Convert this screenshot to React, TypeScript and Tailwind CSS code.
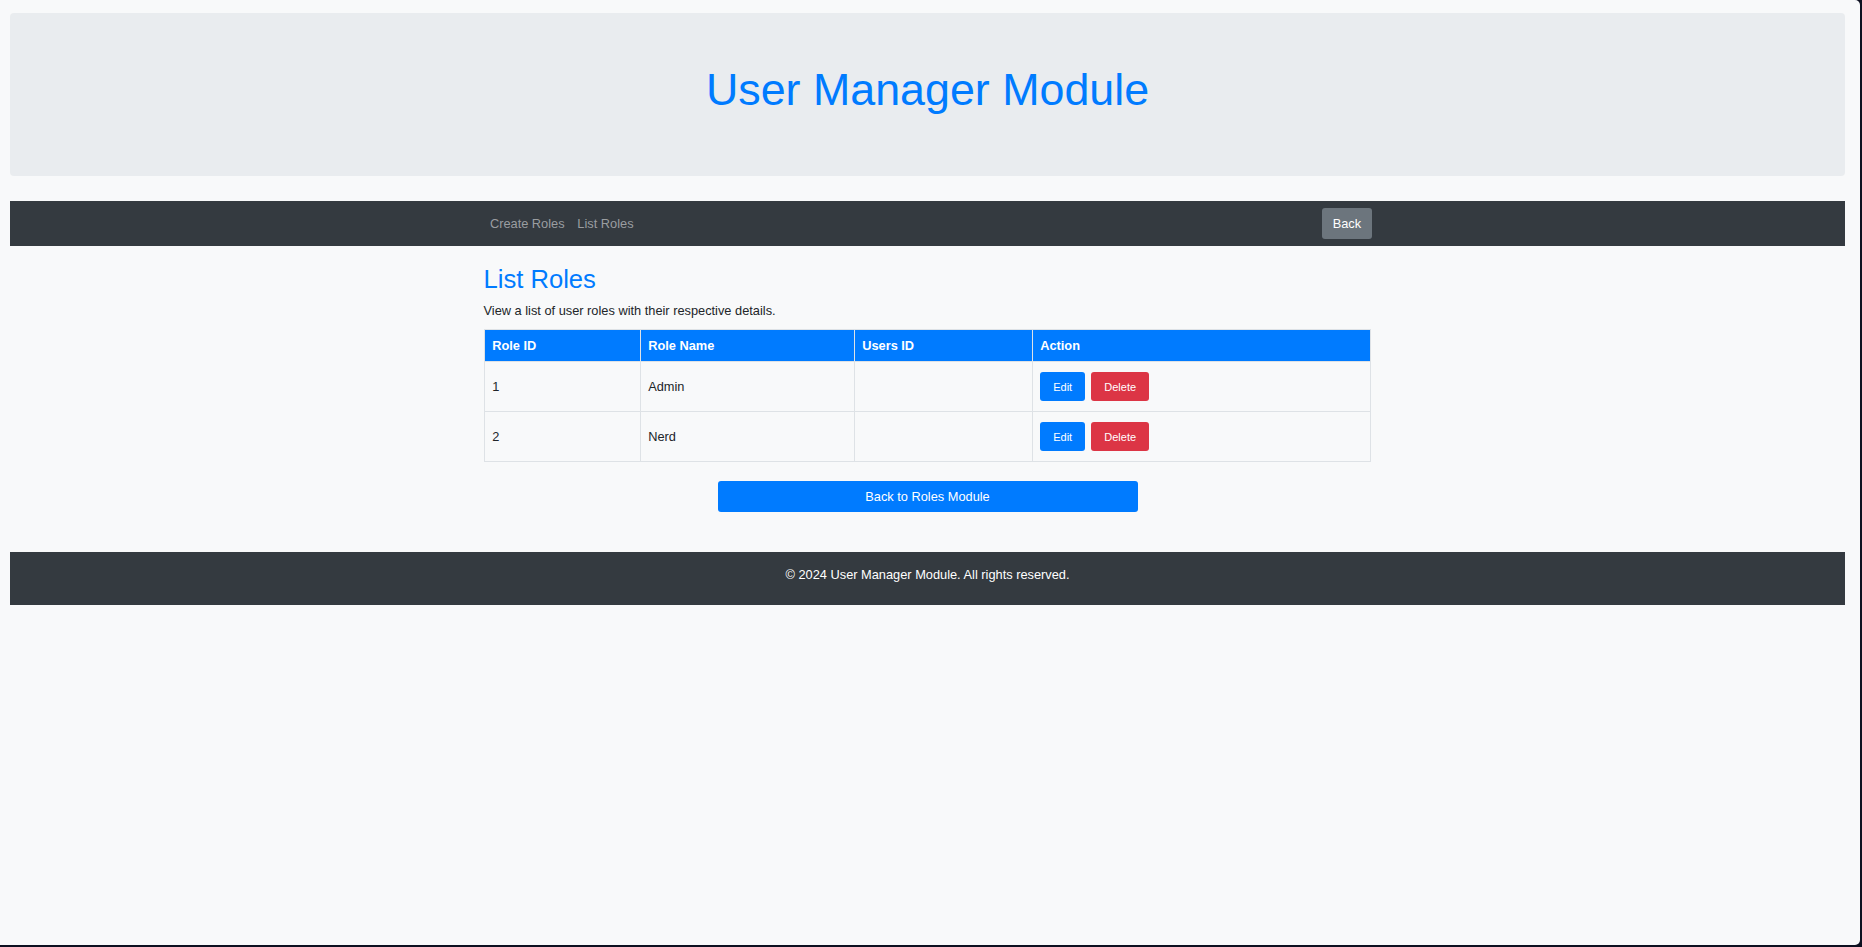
const roles = [
  { id: 1, name: 'Admin', users: '' },
  { id: 2, name: 'Nerd', users: '' },
]

export default function App() {
  return (
    <div className="w-screen h-screen bg-[#0d1020] overflow-hidden" style={{ fontFamily: '"Liberation Sans", Arial, sans-serif' }}>
      <div className="w-[1860px] h-[945px] bg-[#f8f9fa] rounded-tr-[5px] rounded-br-[5px] overflow-hidden pt-[13px] pl-[10px] pr-[15px] text-[#212529]">
        {/* Jumbotron */}
        <header className="h-[163px] bg-[#e9ecef] rounded-[4px] pt-[50px] text-center">
          <h1 className="text-[44.8px] leading-[1.2] font-light text-[#007bff]">User Manager Module</h1>
        </header>

        {/* Navbar */}
        <nav className="mt-[25px] h-[45px] bg-[#343a40]">
          <div className="w-[888px] mx-auto h-full flex items-center justify-between">
            <ul className="flex items-center text-[12.8px] text-[#9a9da0]">
              <li className="px-[6.4px]">Create Roles</li>
              <li className="px-[6.4px]">List Roles</li>
            </ul>
            <button className="h-[31px] px-[10.4px] rounded-[3px] bg-[#6c757d] text-white text-[12.8px]">Back</button>
          </div>
        </nav>

        {/* Main */}
        <main className="w-[888px] mx-auto pt-[18px]">
          <h2 className="text-[25.6px] leading-[1.2] text-[#007bff] mb-[6.4px]">List Roles</h2>
          <p className="text-[12.8px] leading-[1.5] mb-[9px]">View a list of user roles with their respective details.</p>

          <table className="w-[887px] table-fixed border-collapse border border-[#dee2e6] text-[12.8px]">
            <thead>
              <tr className="bg-[#007bff] text-white h-[32px]">
                <th className="w-[156px] text-left font-bold px-[7.7px] border border-[#dee2e6]">Role ID</th>
                <th className="w-[214px] text-left font-bold px-[7.7px] border border-[#dee2e6]">Role Name</th>
                <th className="w-[178px] text-left font-bold px-[7.7px] border border-[#dee2e6]">Users ID</th>
                <th className="text-left font-bold px-[7.7px] border border-[#dee2e6]">Action</th>
              </tr>
            </thead>
            <tbody>
              {roles.map((role) => (
                <tr key={role.id} className="h-[50px]">
                  <td className="px-[7.7px] border border-[#dee2e6]">{role.id}</td>
                  <td className="px-[7.7px] border border-[#dee2e6]">{role.name}</td>
                  <td className="px-[7.7px] border border-[#dee2e6]">{role.users}</td>
                  <td className="px-[7.7px] border border-[#dee2e6]">
                    <div className="flex gap-[6px]">
                      <button className="w-[45px] h-[29px] rounded-[3px] bg-[#007bff] text-white text-[11px]">Edit</button>
                      <button className="w-[58px] h-[29px] rounded-[3px] bg-[#dc3545] text-white text-[11px]">Delete</button>
                    </div>
                  </td>
                </tr>
              ))}
            </tbody>
          </table>

          <div className="flex justify-center mt-[19px]">
            <button className="w-[420px] h-[31px] rounded-[3px] bg-[#007bff] text-white text-[12.8px]">Back to Roles Module</button>
          </div>
        </main>

        {/* Footer */}
        <footer className="mt-[40px] h-[53px] bg-[#343a40] pt-[13px] text-center">
          <p className="text-white text-[12.8px] leading-[1.5]">© 2024 User Manager Module. All rights reserved.</p>
        </footer>
      </div>
    </div>
  )
}
